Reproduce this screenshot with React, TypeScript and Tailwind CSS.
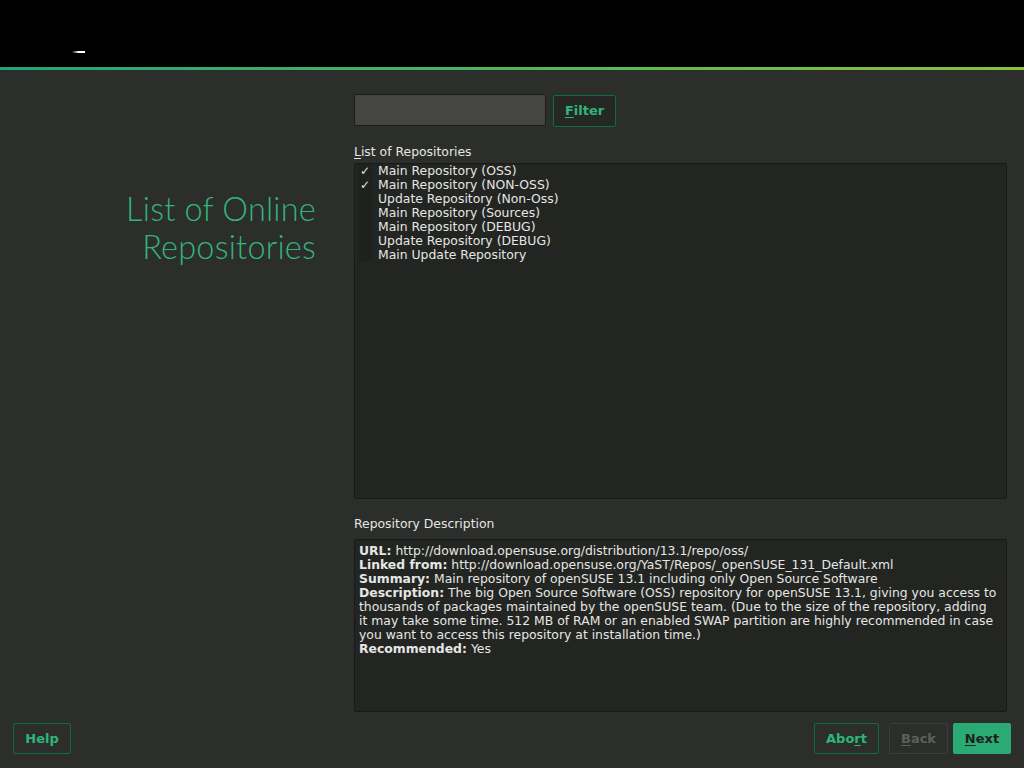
const repos = [
    { name: "Main Repository (OSS)", checked: true },
    { name: "Main Repository (NON-OSS)", checked: true },
    { name: "Update Repository (Non-Oss)", checked: false },
    { name: "Main Repository (Sources)", checked: false },
    { name: "Main Repository (DEBUG)", checked: false },
    { name: "Update Repository (DEBUG)", checked: false },
    { name: "Main Update Repository", checked: false },
];

const ui = { fontFamily: '"DejaVu Sans", "Liberation Sans", sans-serif' };

export default function App() {
    return (
        <div className="flex h-[768px] w-[1024px] flex-col bg-[#2c2e2b] text-[12.4px] leading-[14px] text-[#e6e6e4]" style={ui}>
            <div className="relative h-[68px] bg-black">
                <div className="absolute left-[72px] top-[51px] h-[2px] w-[13px] bg-gradient-to-r from-transparent via-white to-white" />
            </div>
            <div className="h-[3px] bg-gradient-to-r from-[#1fa67a] via-[#4fb55a] to-[#8ac33a]" />

            <div className="flex flex-1 flex-col">
                <div className="flex flex-1">
                    <div className="w-[316px] pt-[120px] text-right">
                        <h1 className="text-[32.5px] font-normal leading-[38px] tracking-[0.2px] text-[#33b47a]" style={{ fontFamily: '"Lato", "Open Sans", sans-serif', fontWeight: 350 }}>
                            List of Online
                            <br />
                            Repositories
                        </h1>
                    </div>

                    <div className="ml-[38px] flex w-[653px] flex-col pt-[24px]">
                        <div className="flex items-start gap-[7px]">
                            <input className="h-[32px] w-[192px] rounded-[2px] border border-[#1c1d1b] bg-[#454644] px-2 text-[#e6e6e4] outline-none" />
                            <button className="mt-[1px] h-[32px] w-[63px] rounded-[2px] border border-[#0f6a48] bg-[#252724] text-[13px] font-bold text-[#2db57a]">
                                <span className="underline underline-offset-2">F</span>ilter
                            </button>
                        </div>

                        <div className="mt-[18px] mb-[4px] h-[14px]">
                            <span className="underline underline-offset-2">L</span>ist of Repositories
                        </div>
                        <div className="h-[336px] rounded-[2px] border border-[#191a18] bg-[#232522]">
                            {repos.map((r) => (
                                <div key={r.name} className="flex h-[14px] items-center">
                                    <div className="ml-[3px] flex h-[14px] w-[14px] items-center justify-center bg-[#1f211e] text-[12px] font-bold text-[#e6e6e4]">
                                        {r.checked ? "✓" : ""}
                                    </div>
                                    <span className="ml-[6px] whitespace-nowrap">{r.name}</span>
                                </div>
                            ))}
                        </div>

                        <div className="mt-[18px] mb-[8px] h-[14px]">Repository Description</div>
                        <div className="h-[173px] rounded-[2px] border border-[#191a18] bg-[#232522] px-[4px] pt-[4px]">
                            <p className="whitespace-nowrap">
                                <b>URL:</b> http://download.opensuse.org/distribution/13.1/repo/oss/
                                <br />
                                <b>Linked from:</b> http://download.opensuse.org/YaST/Repos/_openSUSE_131_Default.xml
                                <br />
                                <b>Summary:</b> Main repository of openSUSE 13.1 including only Open Source Software
                                <br />
                                <b>Description:</b> The big Open Source Software (OSS) repository for openSUSE 13.1, giving you access to
                                <br />
                                thousands of packages maintained by the openSUSE team. (Due to the size of the repository, adding
                                <br />
                                it may take some time. 512 MB of RAM or an enabled SWAP partition are highly recommended in case
                                <br />
                                you want to access this repository at installation time.)
                                <br />
                                <b>Recommended:</b> Yes
                            </p>
                        </div>
                    </div>
                </div>

                <div className="flex items-center px-[13px] pt-[11px] pb-[14px] text-[13px] font-bold">
                    <button className="h-[31px] w-[58px] rounded-[2px] border border-[#0f6a48] text-[#2db57a]">Help</button>
                    <div className="flex-1" />
                    <button className="h-[31px] w-[65px] rounded-[2px] border border-[#0f6a48] text-[#2db57a]">
                        Abo<span className="underline underline-offset-2">r</span>t
                    </button>
                    <button className="ml-[10px] h-[31px] w-[59px] rounded-[2px] border border-[#3a3d39] text-[#5d605c]">
                        <span className="underline underline-offset-2">B</span>ack
                    </button>
                    <button className="ml-[5px] h-[31px] w-[58px] rounded-[2px] bg-[#2aaa74] text-[#1d1f1c]">
                        <span className="underline underline-offset-2">N</span>ext
                    </button>
                </div>
            </div>
        </div>
    );
}
